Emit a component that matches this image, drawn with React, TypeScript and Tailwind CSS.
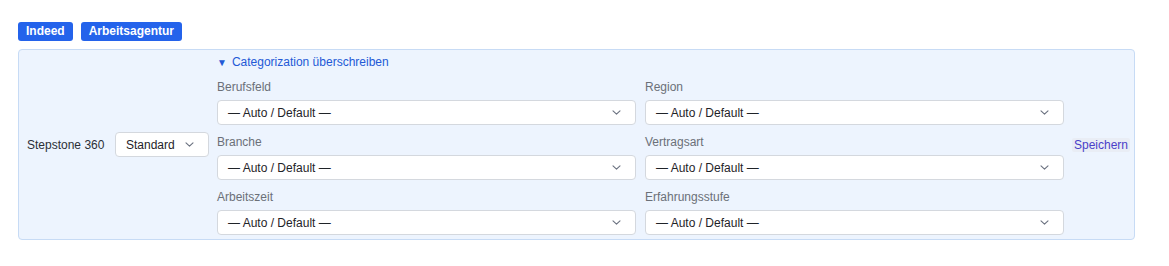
import React from 'react';

const FIELDS: [string, string][] = [
  ['Berufsfeld', 'Region'],
  ['Branche', 'Vertragsart'],
  ['Arbeitszeit', 'Erfahrungsstufe'],
];

function Chevron() {
  return (
    <svg width="9" height="5" viewBox="0 0 9 5" fill="none" className="shrink-0">
      <path d="M1 0.8l3.5 3.4 3.5-3.4" stroke="#6b7280" strokeWidth="1.1" strokeLinecap="round" strokeLinejoin="round" />
    </svg>
  );
}

function FakeSelect({ value, className = '' }: { value: string; className?: string }) {
  return (
    <div className={`flex h-[25px] items-center justify-between rounded-[4px] border border-[#d4d8de] bg-white pl-[10px] pr-[14px] text-[12px] text-[#1f2328] ${className}`}>
      <span>{value}</span>
      <Chevron />
    </div>
  );
}

export default function App() {
  return (
    <div className="min-h-screen bg-white px-[18px] pt-[22px] font-['Liberation_Sans',Arial,sans-serif]">
      <div className="flex gap-2">
        <button className="h-[19px] rounded-[3px] bg-[#2463eb] px-[8px] text-[12px] font-semibold leading-[19px] text-white">Indeed</button>
        <button className="h-[19px] rounded-[3px] bg-[#2463eb] px-[8px] text-[12px] font-semibold leading-[19px] text-white">Arbeitsagentur</button>
      </div>

      <div className="mt-2 flex w-[1117px] items-center gap-2 rounded-[4px] border border-[#c7dbf5] bg-[#edf4fe] pb-[4px] pl-2 pr-[5px] pt-[4px]">
        <span className="w-[80px] shrink-0 text-[12px] text-[#2b2f36]">Stepstone 360</span>
        <FakeSelect value="Standard" className="w-[94px] shrink-0 pl-[8px]" />

        <div className="w-[847px] shrink-0">
          <div className="mb-[9px] flex h-[16px] items-center gap-[5px] text-[12px] text-[#2359d6]">
            <span className="text-[10px]">▼</span>
            <span>Categorization überschreiben</span>
          </div>
          <div className="grid grid-cols-2 gap-x-[9px] gap-y-[9px]">
            {FIELDS.flat().map(label => (
              <div key={label}>
                <div className="mb-[5px] h-[16px] text-[12px] leading-[16px] text-[#6b7078]">{label}</div>
                <FakeSelect value="— Auto / Default —" />
              </div>
            ))}
          </div>
        </div>

        <button className="shrink-0 rounded-[2px] bg-[#e9edf5] px-[2px] text-[12px] leading-[14px] text-[#4a3fc9]">Speichern</button>
      </div>
    </div>
  );
}
